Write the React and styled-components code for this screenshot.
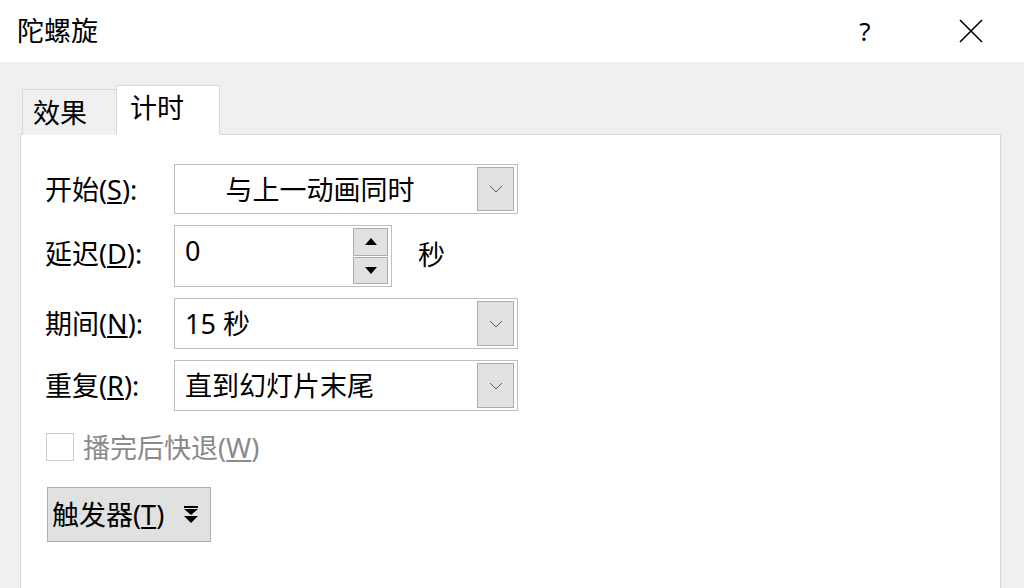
import React from 'react';
import styled, { createGlobalStyle } from 'styled-components';

const GlobalStyle = createGlobalStyle`
  html, body {
    margin: 0;
    padding: 0;
    background: #f0f0f0;
  }
  body {
    font-family: "Noto Sans", "Noto Sans CJK SC", sans-serif;
    color: #000;
  }
`;

const Window = styled.div`
  width: 1024px;
  height: 588px;
  display: flex;
  flex-direction: column;
  overflow: hidden;
  background: #f0f0f0;
`;

const TitleBar = styled.div`
  height: 62px;
  flex-shrink: 0;
  background: #fff;
  display: flex;
  align-items: center;
  padding-left: 17px;
`;

const Title = styled.div`
  flex: 1;
  font-size: 27px;
  line-height: 1;
  margin-top: -2px;
`;

const TitleButton = styled.div`
  width: ${props => props.$w}px;
  height: 62px;
  display: flex;
  align-items: center;
  justify-content: center;
  font-size: 26px;
`;

const Body = styled.div`
  flex: 1;
  display: flex;
  flex-direction: column;
  padding: 23px 23px 0 20px;
`;

const TabStrip = styled.div`
  display: flex;
  align-items: flex-end;
  padding-left: 2px;
  position: relative;
  z-index: 1;
  margin-bottom: -1px;
`;

const Tab = styled.div`
  box-sizing: border-box;
  width: ${props => (props.$active ? 104 : 95)}px;
  height: ${props => (props.$active ? 50 : 46)}px;
  padding: 0 0 0 ${props => (props.$active ? 13 : 10)}px;
  margin-left: ${props => (props.$active ? -1 : 0)}px;
  background: ${props => (props.$active ? '#fff' : '#f0f0f0')};
  border: 1px solid #d9d9d9;
  border-bottom: ${props => (props.$active ? '1px solid #fff' : 'none')};
  display: flex;
  align-items: center;
  font-size: 27px;
  line-height: 1;
  padding-bottom: ${props => (props.$active ? 6 : 0)}px;
`;

const Panel = styled.div`
  flex: 1;
  background: #fff;
  border: 1px solid #d9d9d9;
  border-bottom: none;
  padding: 29px 24px 0 24px;
  display: flex;
  flex-direction: column;
`;

const Form = styled.div`
  display: grid;
  grid-template-columns: 129px auto;
  row-gap: 11px;
  align-items: center;
`;

const Label = styled.div`
  font-size: 27px;
  line-height: 1;
  align-self: ${props => (props.$top ? 'start' : 'center')};
  margin-top: ${props => (props.$top ? 15 : 0)}px;
  white-space: nowrap;
`;

const Select = styled.div`
  box-sizing: border-box;
  width: 344px;
  height: ${props => props.$h || 51}px;
  border: 1px solid #bfbfbf;
  display: flex;
  align-items: center;
  padding: 2px 3px 2px 0;
`;

const SelectText = styled.div`
  flex: 1;
  font-size: 27px;
  line-height: 1;
  padding-left: 10px;
  padding-right: ${props => (props.$center ? 22 : 0)}px;
  text-align: ${props => (props.$center ? 'center' : 'left')};
  white-space: nowrap;
`;

const DropButton = styled.div`
  box-sizing: border-box;
  width: 37px;
  height: 100%;
  background: #e1e1e1;
  border: 1px solid #adadad;
  display: flex;
  align-items: center;
  justify-content: center;
`;

const SpinRow = styled.div`
  display: flex;
  align-items: center;
  gap: 26px;
`;

const SpinBox = styled.div`
  box-sizing: border-box;
  width: 218px;
  height: 62px;
  border: 1px solid #bfbfbf;
  display: flex;
  padding: 2px 3px 2px 0;
`;

const SpinValue = styled.div`
  flex: 1;
  font-size: 27px;
  line-height: 1;
  padding: 9px 0 0 10px;
`;

const SpinButtons = styled.div`
  width: 35px;
  display: flex;
  flex-direction: column;
  gap: 1px;
`;

const SpinButton = styled.div`
  box-sizing: border-box;
  flex: 1;
  background: #e1e1e1;
  border: 1px solid #adadad;
  display: flex;
  align-items: center;
  justify-content: center;
`;

const Unit = styled.div`
  font-size: 27px;
  line-height: 1;
  margin-top: -4px;
`;

const CheckRow = styled.div`
  display: flex;
  align-items: center;
  gap: 9px;
  margin-top: 22px;
  margin-left: 1px;
  color: #8a8a8a;
  font-size: 27px;
  line-height: 1;
`;

const CheckBox = styled.div`
  box-sizing: border-box;
  width: 28px;
  height: 28px;
  border: 1px solid #cccccc;
  background: #fff;
`;

const TriggerButton = styled.div`
  box-sizing: border-box;
  align-self: flex-start;
  margin: 26px 0 0 2px;
  width: 164px;
  height: 55px;
  background: #e1e1e1;
  border: 1px solid #adadad;
  display: flex;
  align-items: center;
  gap: 19px;
  padding-left: 4px;
  font-size: 27px;
  line-height: 1;
`;

const Chevron = () => (
  <svg width="14" height="8" viewBox="0 0 14 8">
    <path d="M1 1 L7 7 L13 1" fill="none" stroke="#5a5a5a" strokeWidth="1" />
  </svg>
);

const Triangle = ({ up }) => (
  <svg width="12" height="7" viewBox="0 0 12 7">
    <path d={up ? 'M0 7 L6 0 L12 7 Z' : 'M0 0 L6 7 L12 0 Z'} fill="#000" />
  </svg>
);

const DoubleDown = () => (
  <svg width="16" height="20" viewBox="0 0 16 20">
    <rect x="1" y="1" width="14" height="2" fill="#000" />
    <path d="M1 4 L15 4 L8 10 Z" fill="#000" />
    <path d="M1 11 L15 11 L8 18 Z" fill="#000" />
  </svg>
);

const CloseIcon = () => (
  <svg width="24" height="24" viewBox="0 0 24 24">
    <path d="M1 1 L23 23 M23 1 L1 23" stroke="#000" strokeWidth="1.6" fill="none" />
  </svg>
);

const App = () => (
  <>
    <GlobalStyle />
    <Window>
      <TitleBar>
        <Title>陀螺旋</Title>
        <TitleButton $w={56}>?</TitleButton>
        <TitleButton $w={50} style={{ marginLeft: 53, marginRight: 28 }}>
          <CloseIcon />
        </TitleButton>
      </TitleBar>
      <Body>
        <TabStrip>
          <Tab>效果</Tab>
          <Tab $active>计时</Tab>
        </TabStrip>
        <Panel>
          <Form>
            <Label>开始(<u>S</u>):</Label>
            <Select $h={50}>
              <SelectText $center>与上一动画同时</SelectText>
              <DropButton><Chevron /></DropButton>
            </Select>

            <Label $top>延迟(<u>D</u>):</Label>
            <SpinRow>
              <SpinBox>
                <SpinValue>0</SpinValue>
                <SpinButtons>
                  <SpinButton><Triangle up /></SpinButton>
                  <SpinButton><Triangle /></SpinButton>
                </SpinButtons>
              </SpinBox>
              <Unit>秒</Unit>
            </SpinRow>

            <Label>期间(<u>N</u>):</Label>
            <Select>
              <SelectText>15 秒</SelectText>
              <DropButton><Chevron /></DropButton>
            </Select>

            <Label>重复(<u>R</u>):</Label>
            <Select>
              <SelectText>直到幻灯片末尾</SelectText>
              <DropButton><Chevron /></DropButton>
            </Select>
          </Form>

          <CheckRow>
            <CheckBox />
            <span>播完后快退(<u>W</u>)</span>
          </CheckRow>

          <TriggerButton>
            <span>触发器(<u>T</u>)</span>
            <DoubleDown />
          </TriggerButton>
        </Panel>
      </Body>
    </Window>
  </>
);

export default App;
